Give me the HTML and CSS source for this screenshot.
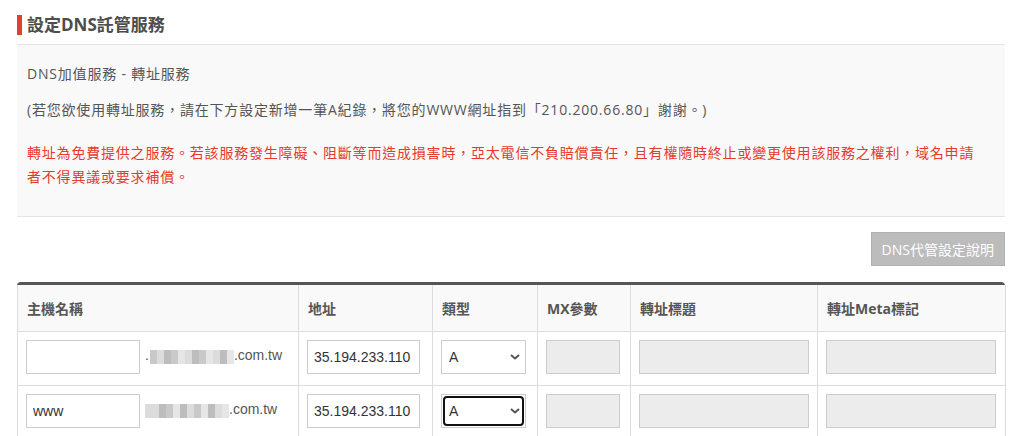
FILE: index.html
```html
<!DOCTYPE html>
<html lang="zh-Hant">
<head>
  <meta charset="UTF-8">
  <title>設定DNS託管服務</title>
  <link rel="stylesheet" href="styles.css">
</head>
<body>
  <div class="page">
    <h2 class="title">設定DNS託管服務</h2>

    <!-- 轉址服務說明 -->
    <div class="notice">
      <p>DNS加值服務 - 轉址服務</p>
      <p class="gap">(若您欲使用轉址服務，請在下方設定新增一筆A紀錄，將您的WWW網址指到「210.200.66.80」謝謝。)</p>
      <p class="warn">轉址為免費提供之服務。若該服務發生障礙、阻斷等而造成損害時，亞太電信不負賠償責任，且有權隨時終止或變更使用該服務之權利，域名申請者不得異議或要求補償。</p>
    </div>

    <div class="toolbar">
      <button class="help-btn">DNS代管設定說明</button>
    </div>

    <div class="table-wrap">
      <table class="records">
        <colgroup>
          <col style="width:281px">
          <col style="width:134px">
          <col style="width:105px">
          <col style="width:93px">
          <col style="width:187px">
          <col style="width:188px">
        </colgroup>
        <thead>
          <tr>
            <th>主機名稱</th>
            <th>地址</th>
            <th>類型</th>
            <th>MX參數</th>
            <th>轉址標題</th>
            <th>轉址Meta標記</th>
          </tr>
        </thead>
        <tbody>
          <tr>
            <td>
              <div class="host">
                <input class="inp host-inp" type="text" value="">
                <span class="domain"><span class="dot">.</span><span class="mosaic"><i class="m1"></i><i class="m2"></i><i class="m3"></i><i class="m1"></i><i class="m4"></i><i class="m2"></i><i class="m3"></i><i class="m1"></i><i class="m4"></i><i class="m2"></i><i class="m3"></i><i class="m4"></i></span>.com.tw</span>
              </div>
            </td>
            <td><input class="inp addr" type="text" value="35.194.233.110"></td>
            <td>
              <span class="sel">
                <select><option>A</option></select>
                <svg class="chev" width="10" height="6" viewBox="0 0 10 6"><path d="M1 1l4 3.5L9 1" fill="none" stroke="#555" stroke-width="2"/></svg>
              </span>
            </td>
            <td><input class="inp mx" type="text" disabled></td>
            <td><input class="inp wide" type="text" disabled></td>
            <td><input class="inp wide" type="text" disabled></td>
          </tr>
          <tr>
            <td>
              <div class="host">
                <input class="inp host-inp" type="text" value="www">
                <span class="domain"><span class="mosaic"><i class="m2"></i><i class="m2"></i><i class="m3"></i><i class="m1"></i><i class="m4"></i><i class="m3"></i><i class="m2"></i><i class="m1"></i><i class="m4"></i><i class="m3"></i><i class="m2"></i><i class="m4"></i></span>.com.tw</span>
              </div>
            </td>
            <td><input class="inp addr" type="text" value="35.194.233.110"></td>
            <td>
              <span class="sel focused">
                <select><option>A</option></select>
                <svg class="chev" width="10" height="6" viewBox="0 0 10 6"><path d="M1 1l4 3.5L9 1" fill="none" stroke="#555" stroke-width="2"/></svg>
              </span>
            </td>
            <td><input class="inp mx" type="text" disabled></td>
            <td><input class="inp wide" type="text" disabled></td>
            <td><input class="inp wide" type="text" disabled></td>
          </tr>
        </tbody>
      </table>
    </div>
  </div>
</body>
</html>
```

FILE: styles.css
```css
body {
  margin: 0;
  background: #fff;
  font-family: "Open Sans", "Noto Sans CJK TC", sans-serif;
  color: #555;
  font-size: 14px;
}
.page {
  padding: 0 17px;
}
.title {
  margin: 0;
  padding: 15px 0 9px;
  border-bottom: 1px solid #e5e5e5;
  font-size: 17px;
  line-height: 20px;
  font-weight: bold;
  color: #4d4d4d;
  display: flex;
  align-items: center;
  gap: 5px;
}
.title::before {
  content: "";
  width: 5px;
  height: 20px;
  background: #e0432d;
}
.notice {
  background: #f9f9f9;
  border-bottom: 1px solid #e5e5e5;
  padding: 17px 22px 27px 10px;
  letter-spacing: 0.8px;
}
.notice p {
  margin: 0 0 12px;
  line-height: 24px;
}
.notice p.gap {
  margin-bottom: 19px;
}
.notice p.warn {
  margin: 0;
  color: #e63a2c;
}
.toolbar {
  display: flex;
  justify-content: flex-end;
  padding: 15px 0 16px;
}
.help-btn {
  height: 34px;
  padding: 0 10px;
  border: 1px solid #b0b0b0;
  background: #bcbcbc;
  color: #fff;
  font-family: inherit;
  font-size: 14px;
}
.table-wrap {
  border-top: 3px solid #555;
  border-radius: 4px 4px 0 0;
}
.records {
  width: 100%;
  table-layout: fixed;
  border-collapse: collapse;
}
.records th,
.records td {
  border: 1px solid #ddd;
  text-align: left;
  vertical-align: top;
}
.records tr:first-child th {
  border-top: none;
}
.records th {
  background: #f9f9f9;
  height: 46px;
  padding: 0 9px;
  font-size: 14px;
  font-weight: bold;
  color: #555;
  vertical-align: middle;
}
.records td {
  padding: 8px 8px 11px;
}
.host {
  display: flex;
  align-items: center;
  gap: 5px;
}
.inp {
  box-sizing: border-box;
  height: 34px;
  border: 1px solid #ccc;
  padding: 0 6px;
  font-family: "Liberation Sans", Arial, sans-serif;
  font-size: 14px;
  color: #333;
  background: #fff;
  display: block;
}
.inp:disabled {
  background: #ececec;
}
.host-inp { width: 114px; }
.addr { width: 113px; }
.mx { width: 74px; }
.wide { width: 170px; }
.domain {
  font-family: "Liberation Sans", Arial, sans-serif;
  font-size: 14px;
  color: #555;
  margin-top: -4px;
  display: flex;
  align-items: center;
}
.dot {
  margin-right: 1px;
}
.mosaic {
  display: flex;
  height: 14px;
  margin-top: 3px;
}
.mosaic i {
  width: 7px;
  height: 14px;
}
.m1 { background: #c9c9c9; }
.m2 { background: #dcdcdc; }
.m3 { background: #bdbdbd; }
.m4 { background: #e6e6e6; }
.sel {
  position: relative;
  display: block;
  width: 85px;
}
.sel select {
  appearance: none;
  -webkit-appearance: none;
  box-sizing: border-box;
  width: 85px;
  height: 34px;
  border: 1px solid #ccc;
  border-radius: 0;
  background: #fff;
  padding: 0 7px;
  font-family: "Liberation Sans", Arial, sans-serif;
  font-size: 14px;
  color: #333;
}
.chev {
  position: absolute;
  right: 6px;
  top: 14px;
}
.sel.focused::after {
  content: "";
  position: absolute;
  left: 2px;
  right: 2px;
  top: 2px;
  bottom: 2px;
  border: 2px solid #111;
  border-radius: 4px;
}
```
